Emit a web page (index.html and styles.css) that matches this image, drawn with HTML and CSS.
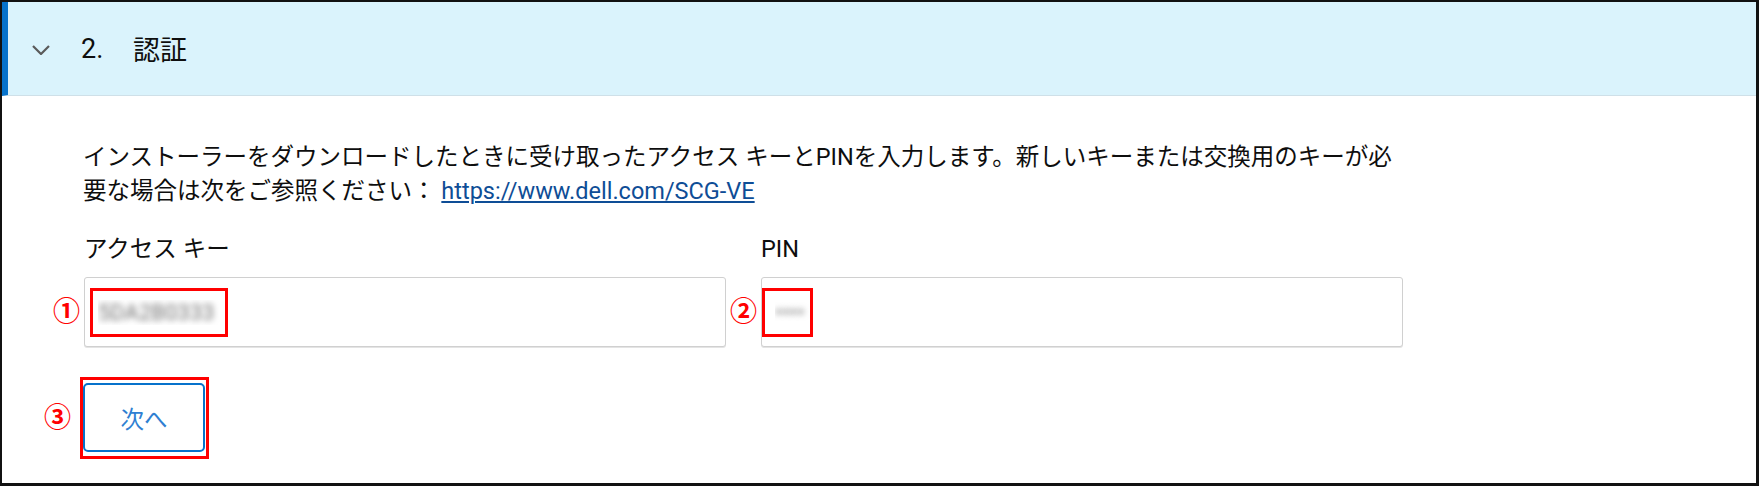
FILE: index.html
```html
<!DOCTYPE html>
<html lang="ja">
<head>
    <meta charset="UTF-8">
    <meta name="viewport" content="width=device-width, initial-scale=1.0">
    <title>認証</title>
    <link rel="stylesheet" href="styles.css">
</head>
<body>
    <div class="frame">
        <div class="panel-head">
            <svg class="chevron" width="18" height="10" viewBox="0 0 18 10">
                <polyline points="1,1 9,9 17,1" fill="none" stroke="#5a5a5a" stroke-width="2.2"/>
            </svg>
            <span class="step-no">2.</span>
            <span class="step-title">認証</span>
        </div>

        <div class="panel-body">
            <p class="intro">インストーラーをダウンロードしたときに受け取ったアクセス キーとPINを入力します。新しいキーまたは交換用のキーが必要な場合は次をご参照ください： <a href="#">https://www.dell.com/SCG-VE</a></p>

            <div class="fields">
                <div class="field">
                    <label for="access-key">アクセス キー</label>
                    <div class="input-wrap">
                        <input type="text" id="access-key" value="5DA2B0333">
                        <span class="mark num-1">①</span>
                        <span class="callout box-1"></span>
                    </div>
                </div>
                <div class="field">
                    <label for="pin">PIN</label>
                    <div class="input-wrap">
                        <input type="password" id="pin" value="1234">
                        <span class="mark num-2">②</span>
                        <span class="callout box-2"></span>
                    </div>
                </div>
            </div>

            <div class="actions">
                <button type="button">次へ</button>
                <span class="mark num-3">③</span>
                <span class="callout box-3"></span>
            </div>
        </div>
    </div>
</body>
</html>
```

FILE: styles.css
```css
/* Reset */
body, p, button, input, label {
    margin: 0;
    padding: 0;
    box-sizing: border-box;
    font-family: Roboto, "Noto Sans CJK JP", sans-serif;
}

body {
    background: #fff;
    color: #0e0e0e;
}

/* Outer frame of the screenshot */
.frame {
    width: 1759px;
    height: 486px;
    box-sizing: border-box;
    border: solid #111;
    border-width: 2px 3px 3px 2px;
    overflow: hidden;
}

/* Accordion header */
.panel-head {
    height: 94px;
    display: flex;
    align-items: center;
    background: #daf3fc;
    border-left: 6px solid #0672cb;
    border-bottom: 1px solid #cfe0e8;
    box-sizing: border-box;
    font-size: 27px;
}

.chevron {
    margin-left: 24px;
    margin-top: 2px;
}

.step-no {
    margin-left: 31px;
    width: 52px;
}

/* Body */
.panel-body {
    padding: 44px 0 0 81px;
}

.intro {
    width: 1320px;
    font-size: 23.5px;
    line-height: 34px;
}

.intro a {
    color: #0e4d96;
    text-decoration-thickness: 2px;
    text-underline-offset: 2px;
}

.fields {
    display: grid;
    grid-template-columns: 642px 642px;
    column-gap: 35px;
    margin-top: 24px;
    padding-left: 1px;
}

.field label {
    display: block;
    font-size: 23.5px;
    line-height: 34px;
    margin-bottom: 11px;
}

.input-wrap {
    position: relative;
}

.input-wrap input {
    width: 100%;
    height: 70px;
    padding: 0 13px;
    border: 1px solid #d0d0d0;
    border-radius: 3px;
    box-shadow: 0 1px 0 #e4e4e4;
    font-size: 22px;
    color: transparent;
    text-shadow: 0 0 6px rgba(0, 0, 0, 0.55);
    outline: none;
}

.actions {
    position: relative;
    margin-top: 36px;
}

button {
    width: 122px;
    height: 69px;
    background: #fff;
    border: 2px solid #0672cb;
    border-radius: 5px;
    color: #2f7fd2;
    font-size: 23.5px;
    cursor: pointer;
}

/* Red annotation marks */
.callout {
    position: absolute;
    border: 3px solid #f00;
    box-sizing: border-box;
}

.mark {
    position: absolute;
    color: #f00;
    font-weight: bold;
    font-size: 27px;
    line-height: 30px;
}

.box-1 { left: 6px; top: 11px; width: 138px; height: 49px; }
.num-1 { left: -31px; top: 20px; }

.box-2 { left: 1px; top: 11px; width: 51px; height: 49px; }
.num-2 { left: -31px; top: 20px; }

.box-3 { left: -3px; top: -6px; width: 129px; height: 82px; }
.num-3 { left: -39px; top: 20px; }
```
